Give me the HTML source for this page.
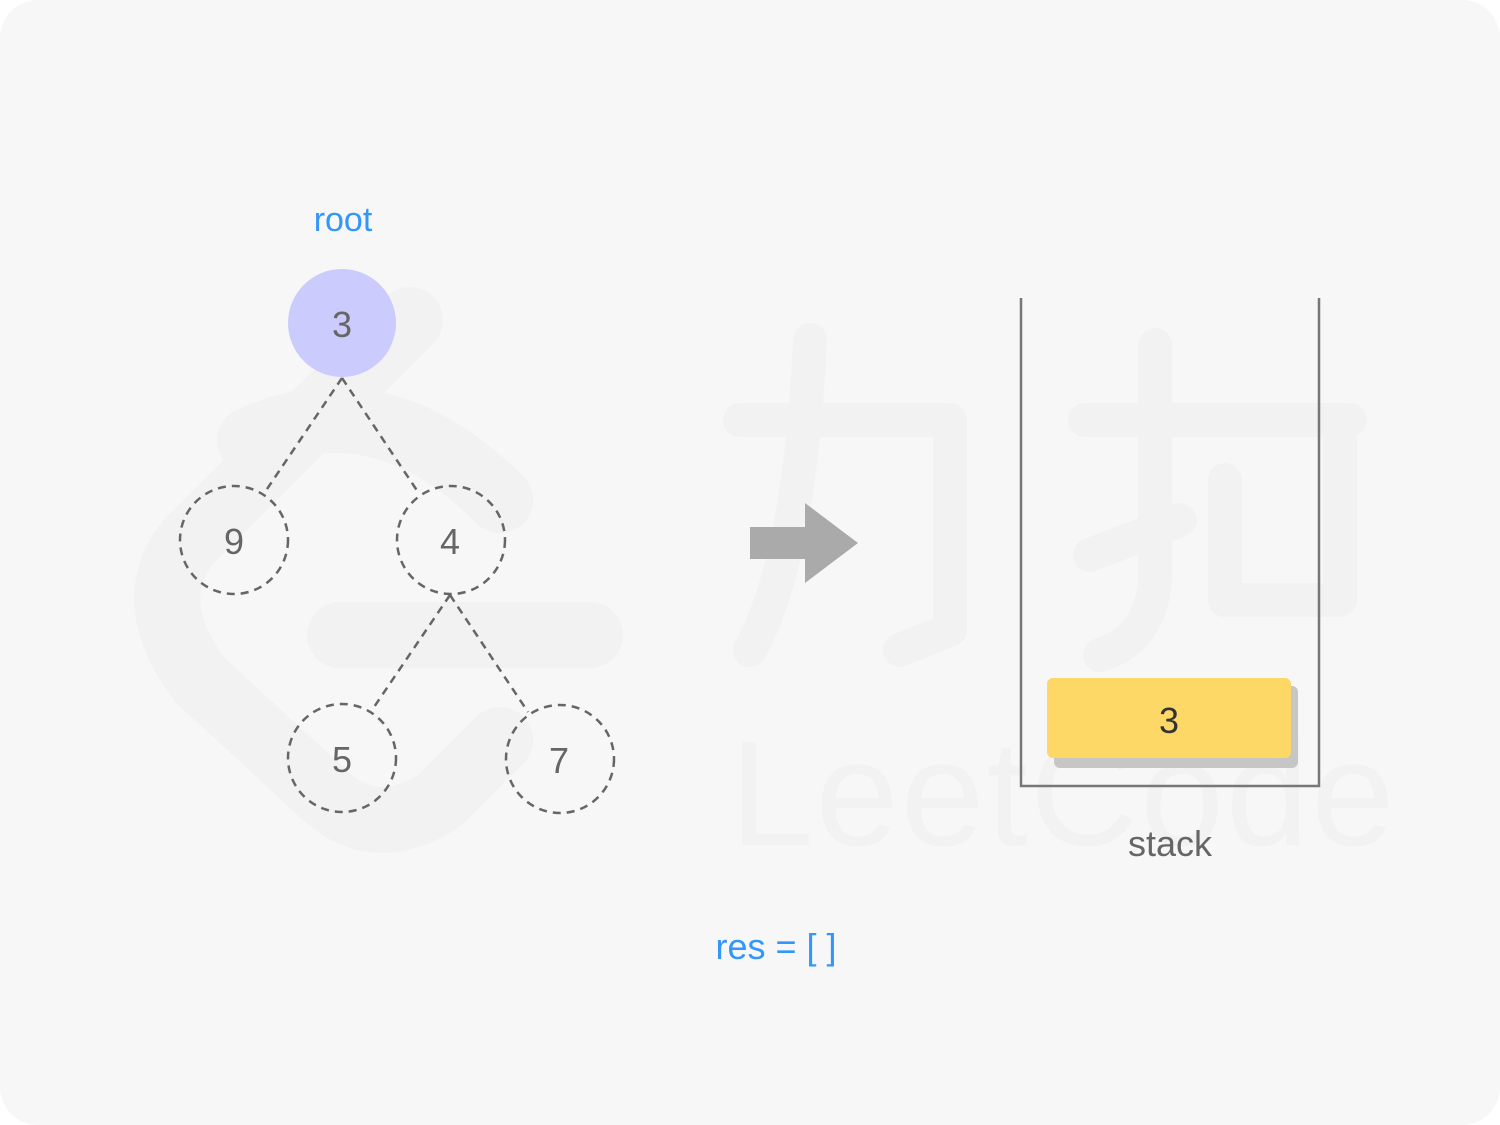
<!DOCTYPE html>
<html><head><meta charset="utf-8"><style>
html,body{margin:0;padding:0;background:#fff;}
body{width:1500px;height:1125px;position:relative;overflow:hidden;font-family:"Liberation Sans",Arial,sans-serif;}
</style></head><body>
<svg width="1500" height="1125" viewBox="0 0 1500 1125" xmlns="http://www.w3.org/2000/svg" style="position:absolute;left:0;top:0">
<rect x="0" y="0" width="1500" height="1125" rx="38" fill="#f7f7f7"/>
<g fill="none" stroke="#f2f2f2" stroke-linecap="round" stroke-linejoin="round">
  <path d="M410 320 L190 540 Q140 600 200 680 L330 800 Q380 840 440 800 L500 740" stroke-width="66"/>
  <path d="M250 440 Q380 380 500 500" stroke-width="66"/>
  <path d="M340 635 L590 635" stroke-width="66"/>
  <path d="M740 420 L950 420 L950 630 L900 650" stroke-width="34"/>
  <path d="M810 340 Q800 560 750 650" stroke-width="34"/>
  <path d="M1085 420 L1350 420" stroke-width="34"/>
  <path d="M1155 345 L1155 580 Q1150 640 1100 655" stroke-width="34"/>
  <path d="M1090 555 L1180 520" stroke-width="34"/>
  <path d="M1225 480 L1225 600 L1340 600 L1340 430" stroke-width="34"/>
</g>
<text x="730" y="845" font-size="150" fill="#f2f2f2" font-family="Liberation Sans" letter-spacing="2">LeetCode</text>
<g stroke="#666" stroke-width="2.5" stroke-dasharray="8 6" fill="none">
  <line x1="342" y1="378" x2="265" y2="492"/>
  <line x1="342" y1="378" x2="418" y2="492"/>
  <line x1="450" y1="595" x2="372" y2="710"/>
  <line x1="450" y1="595" x2="528" y2="712"/>
  <circle cx="234" cy="540" r="54"/>
  <circle cx="451" cy="540" r="54"/>
  <circle cx="342" cy="758" r="54"/>
  <circle cx="560" cy="759" r="54"/>
</g>
<circle cx="342" cy="323" r="54" fill="#cbcbfd"/>
<g font-size="36" fill="#666" text-anchor="middle">
  <text x="342" y="337">3</text>
  <text x="234" y="554">9</text>
  <text x="450" y="554">4</text>
  <text x="342" y="772">5</text>
  <text x="559" y="773">7</text>
</g>
<text x="343" y="231" font-size="34" fill="#3296fa" text-anchor="middle">root</text>
<path d="M750 527 L805 527 L805 503 L858 543 L805 583 L805 559 L750 559 Z" fill="#aaaaaa"/>
<path d="M1021 298 L1021 786 L1319 786 L1319 298" fill="none" stroke="#777" stroke-width="2.5"/>
<rect x="1054" y="686" width="244" height="82" rx="6" fill="#c6c6c6"/>
<rect x="1047" y="678" width="244" height="80" rx="6" fill="#fdd866"/>
<text x="1169" y="733" font-size="36" fill="#333" text-anchor="middle">3</text>
<text x="1170" y="856" font-size="36" fill="#666" text-anchor="middle">stack</text>
<text x="776" y="959" font-size="36" fill="#3296fa" text-anchor="middle">res = [ ]</text>
</svg>
</body></html>
